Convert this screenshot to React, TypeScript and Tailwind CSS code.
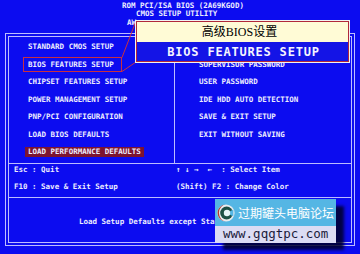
const leftItems = [
  'STANDARD CMOS SETUP',
  'BIOS FEATURES SETUP',
  'CHIPSET FEATURES SETUP',
  'POWER MANAGEMENT SETUP',
  'PNP/PCI CONFIGURATION',
  'LOAD BIOS DEFAULTS',
];

// first right-hand item sits fully under the callout, so its row stays empty
const rightItems = [
  '',
  'SUPERVISOR PASSWORD',
  'USER PASSWORD',
  'IDE HDD AUTO DETECTION',
  'SAVE & EXIT SETUP',
  'EXIT WITHOUT SAVING',
];

function Logo() {
  return (
    <svg width="18" height="18" viewBox="0 0 18 18" className="shrink-0">
      <circle cx="9" cy="9" r="8.6" fill="#e9ecef" />
      <path d="M9 0.6 A8.4 8.4 0 0 0 9 17.4 A7 8.4 0 0 1 9 0.6 Z" fill="#b3362e" />
      <circle cx="9.6" cy="9" r="6.4" fill="#1d4f45" />
      <path d="M9.6 9 L16.4 5.4 L16.4 12.6 Z" fill="#55b6e4" />
      <circle cx="10" cy="9" r="3.2" fill="#e6f4f8" />
    </svg>
  );
}

export default function App() {
  return (
    <div className="relative h-[254px] w-[360px] overflow-hidden bg-[#0c0cf0] font-['DejaVu_Sans_Mono',monospace] text-[7.5px] font-bold text-[#ececff]">
      <header className="pt-[2px] leading-[8px] whitespace-pre">
        <p className="pl-[122px]">ROM PCI/ISA BIOS (2A69KGOD)</p>
        <p className="pl-[136px]">CMOS SETUP UTILITY</p>
        <p className="mt-[1px] pl-[127px]">AW</p>
      </header>

      <div className="mx-[5px] mt-[6px] flex h-[213px] flex-col border-[4px] border-double border-[#bcbcff]">
        <div className="flex h-[127px] border-b border-[#bcbcff]">
          <ul className="w-[166px] border-r border-[#bcbcff] pl-[19px] pt-[1px]">
            {leftItems.map((item) => (
              <li key={item} className="h-[17.6px] leading-[17.6px] whitespace-pre">{item}</li>
            ))}
            <li className="flex h-[17.6px] items-center">
              <span className="-ml-[3px] inline-block bg-[#7c1430] px-[3px] leading-[10px] whitespace-pre">LOAD PERFORMANCE DEFAULTS</span>
            </li>
          </ul>
          <ul className="flex-1 pl-[24px] pt-[1px]">
            {rightItems.map((item, i) => (
              <li key={i} className="h-[17.6px] leading-[17.6px] whitespace-pre">{item}</li>
            ))}
          </ul>
        </div>

        <div className="flex h-[34px] border-b border-[#bcbcff] leading-[12px] whitespace-pre">
          <div className="flex w-[166px] flex-col gap-[5px] pl-[5px]">
            <p>Esc : Quit</p>
            <p>F10 : Save &amp; Exit Setup</p>
          </div>
          <div className="flex flex-1 flex-col gap-[5px] pl-[1px]">
            <p>{'↑ ↓ →  ←  : Select Item'}</p>
            <p>(Shift) F2 : Change Color</p>
          </div>
        </div>

        <div className="flex flex-1 items-center pl-[70px] pt-[4px] whitespace-pre">
          <p>Load Setup Defaults except Standard CMOS SETUP</p>
        </div>
      </div>

      {/* annotation: highlight + connector lines */}
      <div className="absolute left-[23px] top-[57px] h-[15px] w-[99px] border border-[#c83040]" />
      <svg className="pointer-events-none absolute inset-0" width="360" height="254">
        <line x1="122" y1="57.5" x2="136" y2="21" stroke="#c83040" strokeWidth="1" />
        <line x1="122" y1="71.5" x2="136" y2="62" stroke="#c83040" strokeWidth="1" />
      </svg>

      <div className="absolute left-[135px] top-[20px] h-[43px] w-[215px] border border-[#f2f2f2]">
        <div className="flex h-full flex-col border border-[#b0283a]">
          <div className="flex h-[20px] items-center justify-center bg-[#fffbd6] pr-[6px] font-['Liberation_Serif','Noto_Sans_CJK_SC',serif] text-[12px] font-normal text-black">
            高级BIOS设置
          </div>
          <div className="flex flex-1 items-center justify-center bg-[#1414e6] pl-[2px] text-[12px] tracking-[0.8px] text-[#f4f4ff] whitespace-pre">
            BIOS FEATURES SETUP
          </div>
        </div>
      </div>

      {/* watermark */}
      <div className="absolute left-[215px] top-[199px] w-[121px] shadow-[8px_7px_3px_rgba(0,0,40,0.85)]">
        <div className="flex h-[27px] items-center bg-[#55b6e4] pl-[2px]">
          <Logo />
          <span className="ml-[3px] font-['Noto_Sans_CJK_SC',sans-serif] text-[12px] font-normal leading-none text-white">过期罐头电脑论坛</span>
        </div>
        <div className="flex h-[17px] items-center bg-[#dcdcf4] pl-[8px] text-[12.5px] font-normal text-[#1a1a3a]">
          www.gqgtpc.com
        </div>
      </div>
    </div>
  );
}
